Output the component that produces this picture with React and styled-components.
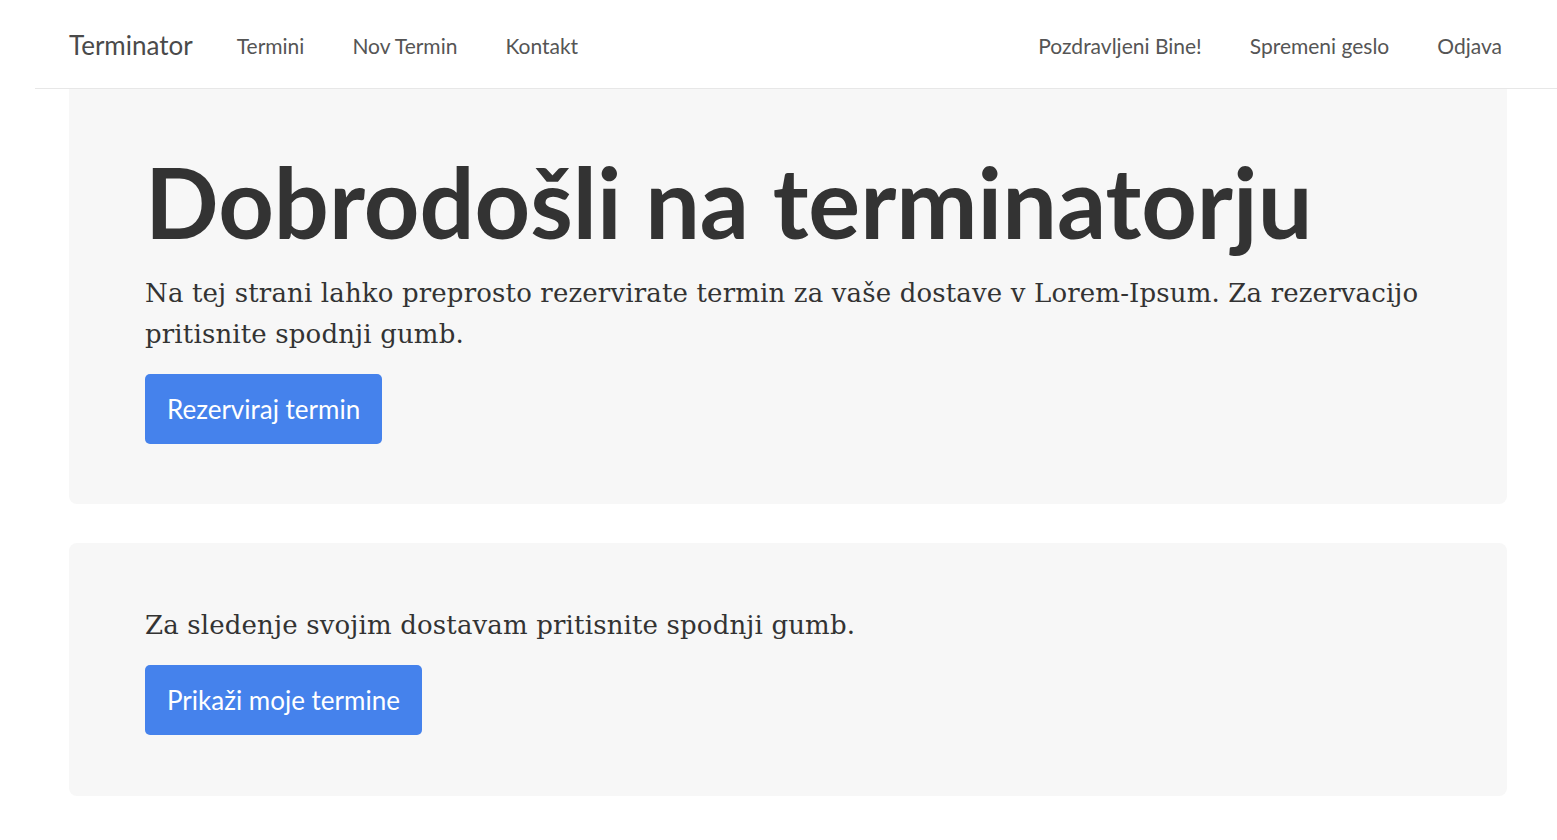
import React from 'react';
import styled, { createGlobalStyle } from 'styled-components';

const GlobalStyle = createGlobalStyle`
  html, body {
    margin: 0;
    padding: 0;
    background: #ffffff;
  }
  body {
    font-family: 'DejaVu Serif', Georgia, serif;
    color: #333333;
  }
`;

const leftLinks = ['Termini', 'Nov Termin', 'Kontakt'];
const rightLinks = ['Pozdravljeni Bine!', 'Spremeni geslo', 'Odjava'];

function App() {
  return (
    <>
      <GlobalStyle />
      <Navbar>
        <NavInner>
          <Brand href="#">Terminator</Brand>
          <NavList>
            {leftLinks.map((l) => (
              <NavLink key={l} href="#">{l}</NavLink>
            ))}
          </NavList>
          <NavList $right>
            {rightLinks.map((l) => (
              <NavLink key={l} href="#">{l}</NavLink>
            ))}
          </NavList>
        </NavInner>
      </Navbar>
      <Container>
        <Jumbotron $flatTop>
          <Title>Dobrodošli na terminatorju</Title>
          <Lead>
            Na tej strani lahko preprosto rezervirate termin za vaše dostave v
            Lorem-Ipsum. Za rezervacijo pritisnite spodnji gumb.
          </Lead>
          <Button>Rezerviraj termin</Button>
        </Jumbotron>
        <Jumbotron $compact>
          <Lead>Za sledenje svojim dostavam pritisnite spodnji gumb.</Lead>
          <Button>Prikaži moje termine</Button>
        </Jumbotron>
      </Container>
    </>
  );
}

export default App;

// styled-components
const Navbar = styled.nav`
  margin-left: 35px;
  height: 88px;
  border-bottom: 1px solid #e7e7e7;
  background: #ffffff;
`;

const NavInner = styled.div`
  display: flex;
  align-items: center;
  height: 100%;
  padding: 2px 31px 0 34px;
  box-sizing: border-box;
  font-family: 'Lato', 'Open Sans', sans-serif;
`;

const Brand = styled.a`
  font-size: 26px;
  color: #4a4a4a;
  text-decoration: none;
  margin-right: 20px;
`;

const NavList = styled.div`
  display: flex;
  align-items: center;
  margin-left: ${(p) => (p.$right ? 'auto' : '0')};
`;

const NavLink = styled.a`
  font-size: 21px;
  color: #555555;
  text-decoration: none;
  padding: 0 24px;
`;

const Container = styled.main`
  width: 1438px;
  margin-left: 69px;
  display: flex;
  flex-direction: column;
  gap: 39px;
`;

const Jumbotron = styled.section`
  background: #f7f7f7;
  border-radius: ${(p) => (p.$flatTop ? '0 0 8px 8px' : '8px')};
  padding: ${(p) => (p.$compact ? '62px 76px 61px' : '60px 76px 60px')};
`;

const Title = styled.h1`
  margin: 0 0 17px;
  font-family: 'Lato', 'Open Sans', sans-serif;
  font-weight: 700;
  font-size: 97px;
  line-height: 1.1;
  color: #333333;
`;

const Lead = styled.p`
  margin: 0 0 19px;
  font-size: 26px;
  letter-spacing: 0.15px;
  line-height: 41px;
  color: #333333;
`;

const Button = styled.button`
  display: inline-block;
  height: 70px;
  padding: 0 22px;
  border: none;
  border-radius: 5px;
  background: #4582ec;
  color: #ffffff;
  font-family: 'Lato', 'Open Sans', sans-serif;
  font-size: 26px;
  cursor: pointer;
`;
